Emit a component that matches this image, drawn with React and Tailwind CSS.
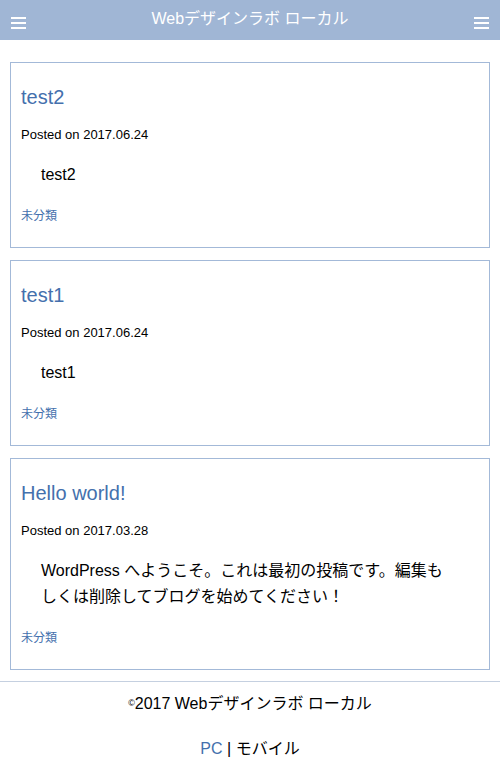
import React from "react";

const font = { fontFamily: '"Liberation Sans", "Noto Sans CJK JP", sans-serif' };

function Burger() {
  return (
    <div className="flex flex-col gap-[3px] w-[15px]">
      <span className="block h-[2px] w-full bg-white" />
      <span className="block h-[2px] w-full bg-white" />
      <span className="block h-[2px] w-full bg-white" />
    </div>
  );
}

function Post({ title, date, children }) {
  return (
    <article className="border border-[#a3b9d8] px-[10px] pt-[19px] pb-[22px]">
      <h2 className="text-[20px] leading-[30px] text-[#4470ad]">{title}</h2>
      <p className="mt-[13px] text-[13px] leading-[20px] text-black">Posted on {date}</p>
      <div className="mt-[17px] ml-[20px] mr-[32px] text-[16px] leading-[26px] text-black">{children}</div>
      <p className="mt-[19px] text-[12px] leading-[18px] text-[#4470ad]">未分類</p>
    </article>
  );
}

export default function App() {
  return (
    <div className="w-[500px] min-h-[782px] bg-white" style={font}>
      <header className="h-[40px] bg-[#a0b6d5] flex items-center justify-between px-[11px] pt-[6px]">
        <Burger />
        <h1 className="text-white text-[16px] leading-[20px] -mt-[8px]">Webデザインラボ ローカル</h1>
        <Burger />
      </header>
      <main className="px-[10px] pt-[22px] flex flex-col gap-[12px]">
        <Post title="test2" date="2017.06.24">test2</Post>
        <Post title="test1" date="2017.06.24">test1</Post>
        <Post title="Hello world!" date="2017.03.28">
          WordPress へようこそ。これは最初の投稿です。編集もしくは削除してブログを始めてください！
        </Post>
      </main>
      <footer className="mt-[11px] border-t border-[#c5d0e0] text-center text-black">
        <p className="mt-[11px] text-[16px] leading-[20px]">
          <span className="text-[9px] align-[3px]">©</span>2017 Webデザインラボ ローカル
        </p>
        <p className="mt-[25px] text-[16px] leading-[20px]">
          <span className="text-[#4470ad]">PC</span> | モバイル
        </p>
      </footer>
    </div>
  );
}
